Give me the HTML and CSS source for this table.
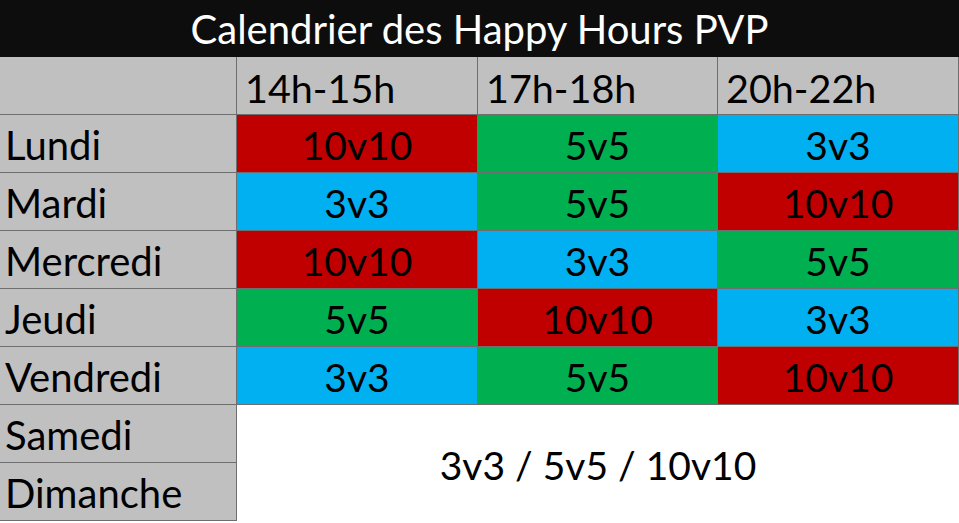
FILE: index.html
```html
<!DOCTYPE html>
<html lang="fr">
<head>
<meta charset="utf-8">
<title>Calendrier des Happy Hours PVP</title>
<link rel="stylesheet" href="styles.css">
</head>
<body>
<div class="sheet">
  <div class="title">Calendrier des Happy Hours PVP</div>
  <div class="grid">
    <div class="cell day"></div>
    <div class="cell head">14h-15h</div>
    <div class="cell head">17h-18h</div>
    <div class="cell head">20h-22h</div>

    <div class="cell day">Lundi</div>
    <div class="cell red">10v10</div>
    <div class="cell green">5v5</div>
    <div class="cell blue">3v3</div>

    <div class="cell day">Mardi</div>
    <div class="cell blue">3v3</div>
    <div class="cell green">5v5</div>
    <div class="cell red">10v10</div>

    <div class="cell day">Mercredi</div>
    <div class="cell red">10v10</div>
    <div class="cell blue">3v3</div>
    <div class="cell green">5v5</div>

    <div class="cell day">Jeudi</div>
    <div class="cell green">5v5</div>
    <div class="cell red">10v10</div>
    <div class="cell blue">3v3</div>

    <div class="cell day">Vendredi</div>
    <div class="cell blue">3v3</div>
    <div class="cell green">5v5</div>
    <div class="cell red">10v10</div>

    <div class="cell day">Samedi</div>
    <div class="cell weekend">3v3 / 5v5 / 10v10</div>
    <div class="cell day">Dimanche</div>
  </div>
</div>
</body>
</html>
```
FILE: styles.css
```css
html, body {
  margin: 0;
  padding: 0;
  background: #ffffff;
}
.sheet {
  width: 959px;
  font-family: "Lato", "Open Sans", sans-serif;
  color: #000000;
}
.title {
  height: 57px;
  background: #0d0d0d;
  color: #ffffff;
  font-size: 40px;
  display: flex;
  align-items: center;
  justify-content: center;
  box-sizing: border-box;
}
.grid {
  display: grid;
  grid-template-columns: 237px 241px 240px 241px;
  grid-template-rows: repeat(8, 58px);
}
.cell {
  box-sizing: border-box;
  border-right: 1px solid #6e6e6e;
  border-bottom: 1px solid #6e6e6e;
  display: flex;
  align-items: center;
  justify-content: center;
  font-size: 39px;
  padding-top: 3px;
}
.day {
  background: #c0c0c0;
  justify-content: flex-start;
  padding-left: 5px;
  font-size: 40px;
}
.head {
  background: #c0c0c0;
  justify-content: flex-start;
  padding-left: 8px;
  font-size: 39.5px;
}
.red { background: #c00000; }
.green { background: #00b050; }
.blue { background: #00b0f0; }
.weekend {
  background: #ffffff;
  grid-column: 2 / 5;
  grid-row: 7 / 9;
  border-bottom: none;
  border-right: none;
}
```
